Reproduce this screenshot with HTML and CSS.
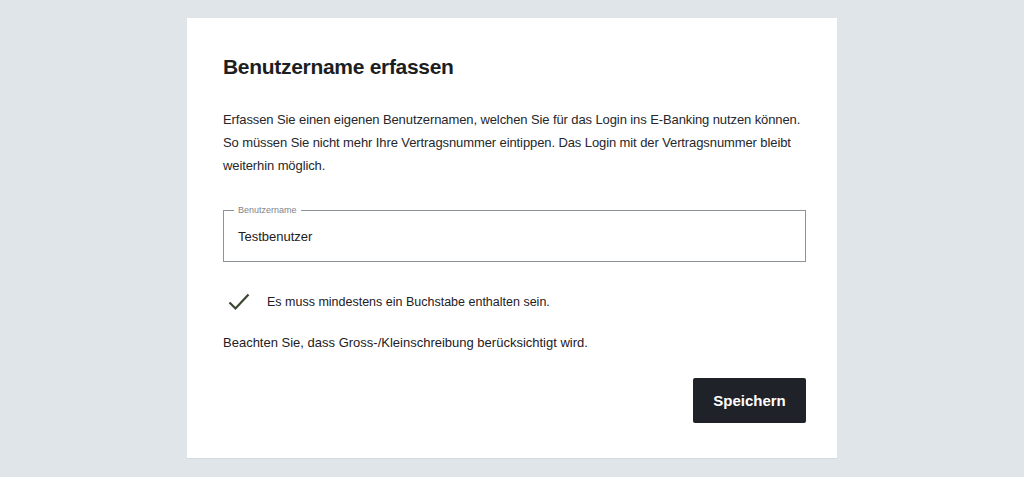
FILE: index.html
```html
<!DOCTYPE html>
<html lang="de">
<head>
<meta charset="utf-8">
<link rel="stylesheet" href="styles.css">
</head>
<body>
<main class="card">
  <h1 class="title">Benutzername erfassen</h1>
  <p class="intro">Erfassen Sie einen eigenen Benutzernamen, welchen Sie für das Login ins E-Banking nutzen können. So müssen Sie nicht mehr Ihre Vertragsnummer eintippen. Das Login mit der Vertragsnummer bleibt weiterhin möglich.</p>
  <fieldset class="field">
    <legend class="field-label">Benutzername</legend>
    <div class="field-value">Testbenutzer</div>
  </fieldset>
  <div class="rule">
    <svg class="check" width="22" height="18" viewBox="0 0 22 18"><path d="M1.5 9.5 L7.5 15.5 L20.5 1.5" fill="none" stroke="#3b4530" stroke-width="2.2"/></svg>
    <span>Es muss mindestens ein Buchstabe enthalten sein.</span>
  </div>
  <p class="note">Beachten Sie, dass Gross-/Kleinschreibung berücksichtigt wird.</p>
  <div class="actions">
    <button class="btn">Speichern</button>
  </div>
</main>
</body>
</html>
```
FILE: styles.css
```css
html, body {
  margin: 0;
  padding: 0;
}
body {
  background: #dfe5e8;
  font-family: "Liberation Sans", Arial, sans-serif;
  color: #1e2024;
  height: 477px;
  overflow: hidden;
}
.card {
  box-sizing: border-box;
  width: 650px;
  height: 440px;
  margin: 18px 0 0 187px;
  background: #fff;
  padding: 35px 31px 0 36px;
  box-shadow: 0 1px 1px rgba(0,0,0,0.04);
}
.title {
  margin: 0;
  font-size: 21px;
  letter-spacing: -0.3px;
  line-height: 28px;
  font-weight: bold;
  color: #1c1e22;
}
.intro {
  margin: 27px 0 0;
  font-size: 13px;
  letter-spacing: -0.1px;
  line-height: 23px;
  color: #25272b;
}
.field {
  margin: 28px 0 0;
  padding: 0 14px;
  border: 1px solid #8e9398;
  height: 57px;
  box-sizing: border-box;
}
.field-label {
  font-size: 9px;
  color: #7f848a;
  padding: 0 4px;
  margin-left: -4px;
  line-height: 10px;
}
.field-value {
  font-size: 13px;
  line-height: 20px;
  margin-top: 12px;
  color: #1e2024;
}
.rule {
  display: flex;
  align-items: center;
  margin-top: 30px;
  font-size: 12.5px;
  line-height: 20px;
}
.check {
  margin-left: 5px;
  margin-right: 17px;
}
.note {
  margin: 21px 0 0;
  font-size: 13px;
  line-height: 20px;
}
.actions {
  display: flex;
  justify-content: flex-end;
  margin-top: 25px;
}
.btn {
  width: 113px;
  height: 45px;
  background: #1f2228;
  color: #fff;
  border: 0;
  border-radius: 2px;
  font-family: inherit;
  font-size: 15px;
  font-weight: bold;
}
```
